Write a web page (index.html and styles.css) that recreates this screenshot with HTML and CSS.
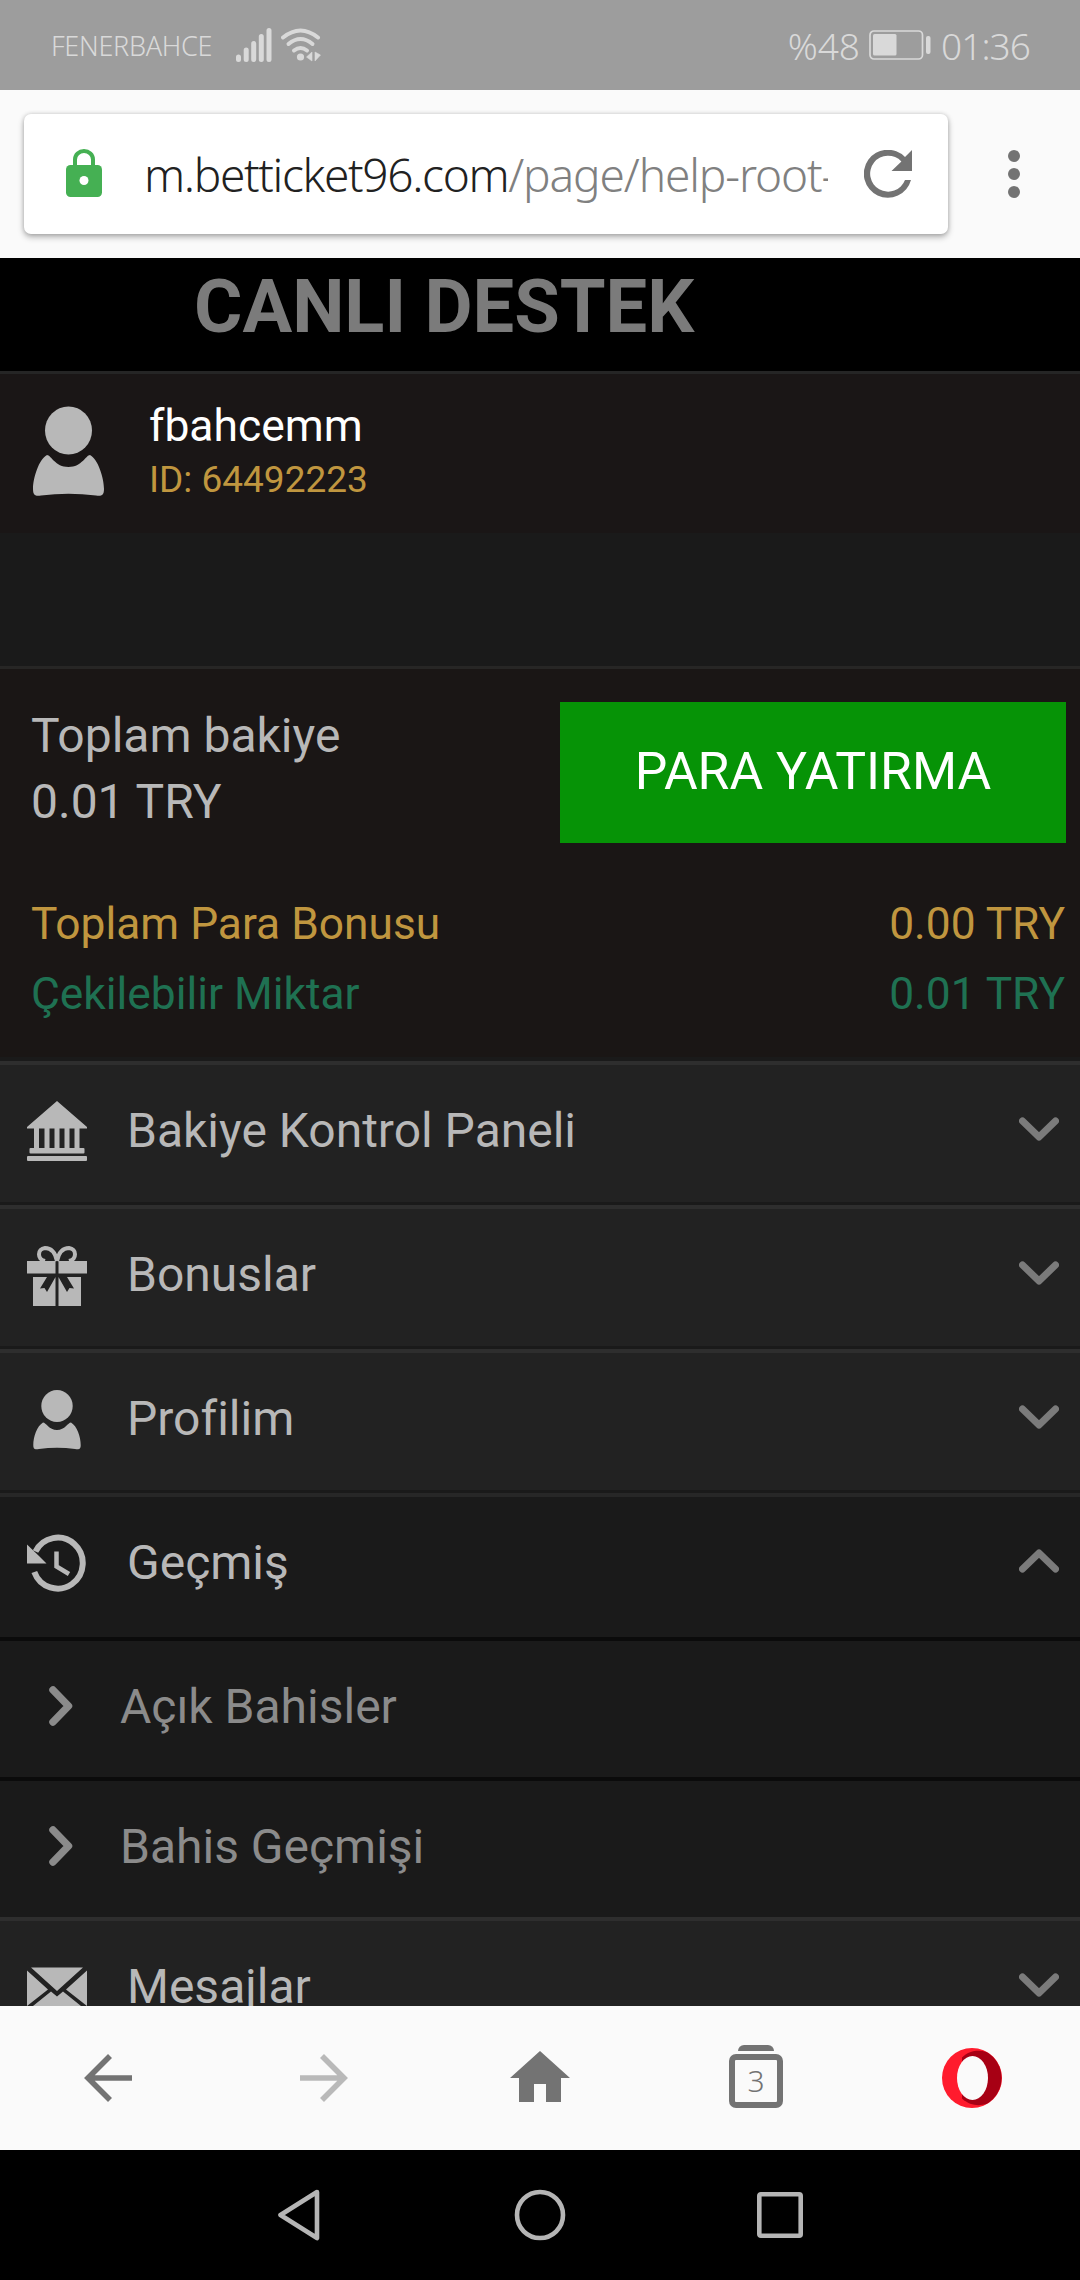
FILE: index.html
```html
<!DOCTYPE html>
<html lang="tr">
<head>
<meta charset="utf-8">
<title>Canlı Destek</title>
<link rel="stylesheet" href="styles.css">
</head>
<body>
<div class="status">
  <span class="carrier">FENERBAHCE</span>
  <svg class="signal" width="36" height="34" viewBox="0 0 36 34"><path d="M2.5 29v2.5M10.200 22v9.500M17.700 15.500v16M25.300 8.500v23M33 2.500v29" stroke="#d9d9d9" stroke-width="5" stroke-linecap="round"/></svg>
  <svg class="wifi" width="40" height="34" viewBox="0 0 40 34"><g fill="none" stroke="#d9d9d9" stroke-width="4" stroke-linecap="round"><path d="M2 9.500Q19.500-4.500 37 9.500"/><path d="M7.500 16Q19.500 6 31.500 16"/><path d="M13 22.500Q19.500 17.500 26 22.500"/></g><circle cx="19.500" cy="29" r="3.600" fill="#d9d9d9"/><path d="M31 24v9l-5.500-4zM34 24v9l5.500-6z" fill="#d9d9d9" stroke="#d9d9d9" stroke-width=".6"/></svg>
  <span class="percent">%48</span>
  <svg class="battery" width="63" height="30" viewBox="0 0 63 30"><rect x="1" y="1" width="52.500" height="28" rx="4" fill="none" stroke="#d9d9d9" stroke-width="1.700"/><rect x="4" y="4" width="23.500" height="21.500" rx="1.500" fill="#d9d9d9"/><rect x="57" y="6" width="4.500" height="18" rx="2" fill="#d9d9d9"/></svg>
  <span class="clock">01:36</span>
</div>

<div class="browser-bar">
  <div class="address">
    <svg class="lock" width="36" height="48" viewBox="0 0 36 48"><path d="M9 18v-7.500a9 8.500 0 0 1 18 0V18" fill="none" stroke="#45b053" stroke-width="4"/><rect y="16" width="36" height="32" rx="4.500" fill="#45b053"/><circle cx="18" cy="31.500" r="4.500" fill="#fff"/></svg>
    <div class="url">m.betticket96.com<span class="url-path">/page/help-root-</span></div>
    <svg class="reload" width="48" height="48" viewBox="0 0 48 48"><path d="M48 0v21H27.500l9.900-9.500A18 18 0 1 0 41 30h6A24 24 0 1 1 41 7z" fill="#737373"/></svg>
  </div>
  <svg class="more" width="12" height="48" viewBox="0 0 12 48" fill="#737373"><circle cx="6" cy="6" r="6"/><circle cx="6" cy="24" r="6"/><circle cx="6" cy="42" r="6"/></svg>
</div>

<main class="page">
  <div class="support">CANLI DESTEK</div>
  <section class="user">
    <svg class="avatar" width="71" height="91" viewBox="0 0 71 91" fill="#b8b8b8"><ellipse cx="35.500" cy="24.500" rx="23.500" ry="24"/><path d="M14 49C18 49 22 61 35.500 61S53 49 57 49C65 53 71 72 71 83C71 90 68 90 63 89.500Q35.500 86 8 89.500C3 90 0 90 0 83C0 72 6 53 14 49Z"/></svg>
    <div class="user-text">
      <div class="user-name">fbahcemm</div>
      <div class="user-id">ID: 64492223</div>
    </div>
  </section>
  <div class="spacer"></div>
  <section class="balance">
    <div class="total">
      <div class="total-text"><div class="total-label">Toplam bakiye</div><div class="total-value">0.01 TRY</div></div>
      <button class="deposit">PARA YATIRMA</button>
    </div>
    <div class="amount bonus"><span>Toplam Para Bonusu</span><span class="money">0.00 TRY</span></div>
    <div class="amount withdraw"><span>Çekilebilir Miktar</span><span class="money">0.01 TRY</span></div>
  </section>
  <nav class="menu">
    <div class="row">
      <svg class="row-icon bank" width="60" height="60" viewBox="0 0 60 60" fill="#b8b8b8"><path d="M30 0L60 26v1.500H0V26zM7 27h5v21H7zM17.500 27h5v21h-5zM27.500 27h5v21h-5zM37.500 27h5v21h-5zM47.500 27h5v21h-5z"/><rect x="2.500" y="47" width="55" height="5.500" rx="1"/><rect y="55" width="60" height="5" rx="1"/></svg>
      <span class="row-label">Bakiye Kontrol Paneli</span>
      <svg class="chevron" width="40" height="25" viewBox="0 0 40 25"><path d="M3.500 4L20 20L36.500 4"/></svg>
    </div>
    <div class="row">
      <svg class="row-icon" width="60" height="60" viewBox="0 0 60 60" fill="#b8b8b8"><path d="M30 15C28 5 23 2 18 2C10 3 10 13 18 15M30 15C32 5 37 2 42 2C50 3 50 13 42 15" fill="none" stroke="#b8b8b8" stroke-width="4"/><path d="M0 15h28.500v12.500H0zM31.500 15H60v12.500H31.500z"/><path d="M6 31h14l-7 11.500 4.500-.5L20 46l8.500-15V60H6zM54 31H40l7 11.500-4.500-.5L40 46l-8.500-15V60H54z"/></svg>
      <span class="row-label">Bonuslar</span>
      <svg class="chevron" width="40" height="25" viewBox="0 0 40 25"><path d="M3.500 4L20 20L36.500 4"/></svg>
    </div>
    <div class="row">
      <svg class="row-icon" width="60" height="60" viewBox="0 0 60 60" fill="#b8b8b8"><ellipse cx="30" cy="16" rx="15.700" ry="16"/><path d="M16 32.500C19 32.500 22 40 30 40S41 32.500 44 32.500C50 36 53.700 47 53.700 55C53.700 59.500 52 59.500 48 59Q30 56.500 12 59C8 59.500 6.300 59.500 6.300 55C6.300 47 10 36 16 32.500Z"/></svg>
      <span class="row-label">Profilim</span>
      <svg class="chevron" width="40" height="25" viewBox="0 0 40 25"><path d="M3.500 4L20 20L36.500 4"/></svg>
    </div>
    <div class="row open">
      <svg class="row-icon" width="60" height="60" viewBox="0 0 60 60" fill="none" stroke="#b8b8b8"><path d="M8.500 17.500A25 25.500 0 1 1 7.300 38" stroke-width="6"/><path d="M0 10.500V29.500H19.500L12 22Z" fill="#b8b8b8" stroke="none"/><path d="M29.500 17.500V32.500L42 40" stroke-width="4.500"/></svg>
      <span class="row-label">Geçmiş</span>
      <svg class="chevron" width="40" height="25" viewBox="0 0 40 25"><path d="M3.500 20L20 4L36.500 20"/></svg>
    </div>
    <div class="subrow">
      <svg class="sub-chevron" width="24" height="40" viewBox="0 0 24 40"><path d="M4 4L19.500 20L4 36"/></svg>
      <span class="sub-label">Açık Bahisler</span>
    </div>
    <div class="subrow">
      <svg class="sub-chevron" width="24" height="40" viewBox="0 0 24 40"><path d="M4 4L19.500 20L4 36"/></svg>
      <span class="sub-label">Bahis Geçmişi</span>
    </div>
    <div class="row last">
      <svg class="row-icon" width="60" height="60" viewBox="0 0 60 60" fill="#b8b8b8"><path d="M4 9.500H56L30 33ZM0 12.500L21 31.500L0 48ZM60 12.500L39 31.500L60 48ZM3.500 50L24 33.500L30 38.500L36 33.500L56.500 50Z"/></svg>
      <span class="row-label">Mesajlar</span>
      <svg class="chevron" width="40" height="25" viewBox="0 0 40 25"><path d="M3.500 4L20 20L36.500 4"/></svg>
    </div>
  </nav>
</main>

<div class="toolbar">
  <div class="tool"><svg width="48" height="48" viewBox="0 0 48 48"><path d="M26 2L4 24L26 46M3.500 24H48" fill="none" stroke="#737373" stroke-width="5.600"/></svg></div>
  <div class="tool"><svg width="48" height="48" viewBox="0 0 48 48"><path d="M22 2L44 24L22 46M44.500 24H0" fill="none" stroke="#b9b9b9" stroke-width="5.600"/></svg></div>
  <div class="tool"><svg class="home" width="60" height="52" viewBox="0 0 60 52"><path d="M30 0L60 27H51V51H36V33H24V51H9V27H0Z" fill="#737373"/></svg></div>
  <div class="tool"><div class="tabs"><span class="tabs-back"></span><span class="tabs-count">3</span></div></div>
  <div class="tool"><svg width="60" height="60" viewBox="0 0 60 60"><ellipse cx="30" cy="30" rx="30" ry="30" fill="#ff1b2d"/><path d="M20 9.500C28 2 37 2 44.500 4A30 30 0 0 1 44.500 56C37 58 28 58 20 50.500Z" fill="#a70014"/><ellipse cx="30.500" cy="30" rx="15.500" ry="22" fill="#fafafa"/></svg></div>
</div>

<div class="system-nav">
  <svg width="46" height="52" viewBox="0 0 46 52"><path d="M40 3L3.500 26L40 49Z"/></svg>
  <svg width="52" height="52" viewBox="0 0 52 52"><circle cx="26" cy="26" r="23"/></svg>
  <svg width="46" height="46" viewBox="0 0 46 46"><rect x="2.300" y="2.300" width="41.400" height="41.400" rx="1.500"/></svg>
</div>
</body>
</html>
```
FILE: styles.css
```css
* { box-sizing: border-box; }
body {
  margin: 0;
  width: 1080px;
  height: 2280px;
  overflow: hidden;
  display: flex;
  flex-direction: column;
  background: #000;
  font-family: Roboto, "Liberation Sans", sans-serif;
  white-space: nowrap;
}
svg { display: block; flex: none; }

.status {
  height: 90px;
  flex: none;
  display: flex;
  align-items: center;
  padding: 0 51px;
  background: #9d9d9d;
  color: #d9d9d9;
  font-family: "Noto Sans", "Open Sans", sans-serif;
  font-weight: 300;
}
.carrier { width: 185px; font-size: 27px; letter-spacing: -.3px; }
.signal { margin-right: 9px; }
.percent { margin-left: auto; margin-right: 9px; font-size: 37px; }
.battery { margin-right: 9px; }
.clock { margin-right: -1px; font-size: 37px; letter-spacing: -.9px; }

.browser-bar {
  height: 168px;
  flex: none;
  display: flex;
  align-items: center;
  justify-content: space-between;
  padding: 0 60px 0 24px;
  background: #fafafa;
}
.address {
  width: 924px;
  height: 120px;
  display: flex;
  align-items: center;
  padding: 0 36px 0 42px;
  border-radius: 7px;
  background: #fff;
  box-shadow: 0 3px 6px rgba(0, 0, 0, .3), 0 0 4px rgba(0, 0, 0, .15);
}
.lock { margin: -2px 42px 0 0; }
.url {
  width: 684px;
  overflow: hidden;
  font-family: "Noto Sans", "Open Sans", sans-serif;
  font-weight: 300;
  font-size: 46px;
  letter-spacing: -1.33px;
  color: #212121;
}
.url-path { color: #808080; letter-spacing: -1.12px; }
.reload { margin-left: auto; }

.page {
  height: 1748px;
  flex: none;
  overflow: hidden;
  background: #1a1a1a;
}
.support {
  height: 113px;
  padding: 5px 0 0 194px;
  background: #000;
  color: #7b7b7b;
  font-size: 74px;
  line-height: 87px;
  font-weight: 700;
}
.user {
  height: 162px;
  display: flex;
  align-items: flex-start;
  padding: 32px 33px 0;
  border-top: 3px solid #252525;
  background: #1a1616;
}
.user-text { margin: -7px 0 0 45px; }
.user-name { color: #fff; font-size: 44.400px; line-height: 54px; }
.user-id { color: #c0963f; font-size: 37px; line-height: 54px; }
.spacer { height: 133px; }
.balance {
  height: 391px;
  padding: 33px 14px 0 31px;
  border-top: 3px solid #272625;
  background: #1a1615;
}
.total { display: flex; justify-content: space-between; height: 141px; margin-bottom: 46px; }
.total-text { padding-top: 1px; color: #b8b8b8; font-size: 48px; line-height: 66px; }
.deposit {
  width: 506px;
  height: 141px;
  padding: 0 0 2px;
  border: 0;
  background: #069306;
  color: #fff;
  font: 400 51.700px Roboto, sans-serif;
}
.amount { display: flex; justify-content: space-between; height: 70px; padding-right: 1px; line-height: 71px; font-size: 44.300px; }
.bonus { color: #c0963f; }
.withdraw { color: #1f7152; }

.menu { padding-top: 4px; }
.row {
  height: 144px;
  display: flex;
  align-items: flex-start;
  padding: 37px 21px 0 27px;
  border-top: 4px solid #2e2e2e;
  border-bottom: 3px solid #1a1a1a;
  background: #222;
  color: #b8b8b8;
}
.row.open { border-top: 4px solid #272727; background: #1a1a1a; }
.bank { margin-top: -1px; }
.row-label { margin-left: 40px; font-size: 48px; line-height: 57px; }
.chevron { margin: 15px 0 0 auto; fill: none; stroke: #7b7b7b; stroke-width: 7px; stroke-linecap: round; stroke-linejoin: round; }
.subrow {
  height: 140px;
  display: flex;
  align-items: center;
  padding: 0 49px 5px;
  border-top: 4px solid #0b0b0b;
  background: #1a1a1a;
  color: #8b8b8b;
}
.sub-chevron { margin-top: -1px; fill: none; stroke: #8b8b8b; stroke-width: 7.500px; stroke-linecap: round; stroke-linejoin: round; }
.sub-label { margin-left: 47px; padding-bottom: 1px; font-size: 48px; }

.toolbar { height: 144px; flex: none; display: flex; background: #fafafa; }
.tool { width: 216px; display: flex; align-items: center; justify-content: center; }
.home { margin-top: -2px; }
.tabs { width: 54px; height: 63px; display: flex; flex-direction: column; align-items: center; gap: 3px; margin-top: -3px; }
.tabs-back { width: 36px; height: 6px; border-radius: 6px 6px 0 0; background: #737373; }
.tabs-count {
  width: 54px;
  height: 54px;
  border: 6px solid #737373;
  border-radius: 7px;
  color: #737373;
  font: 300 30px/41px "Noto Sans", sans-serif;
  text-align: center;
}
.system-nav {
  height: 130px;
  flex: none;
  display: flex;
  align-items: center;
  justify-content: center;
  gap: 191px;
  fill: none;
  stroke: #b5b5b5;
  stroke-width: 4.600px;
  stroke-linejoin: round;
}
```
